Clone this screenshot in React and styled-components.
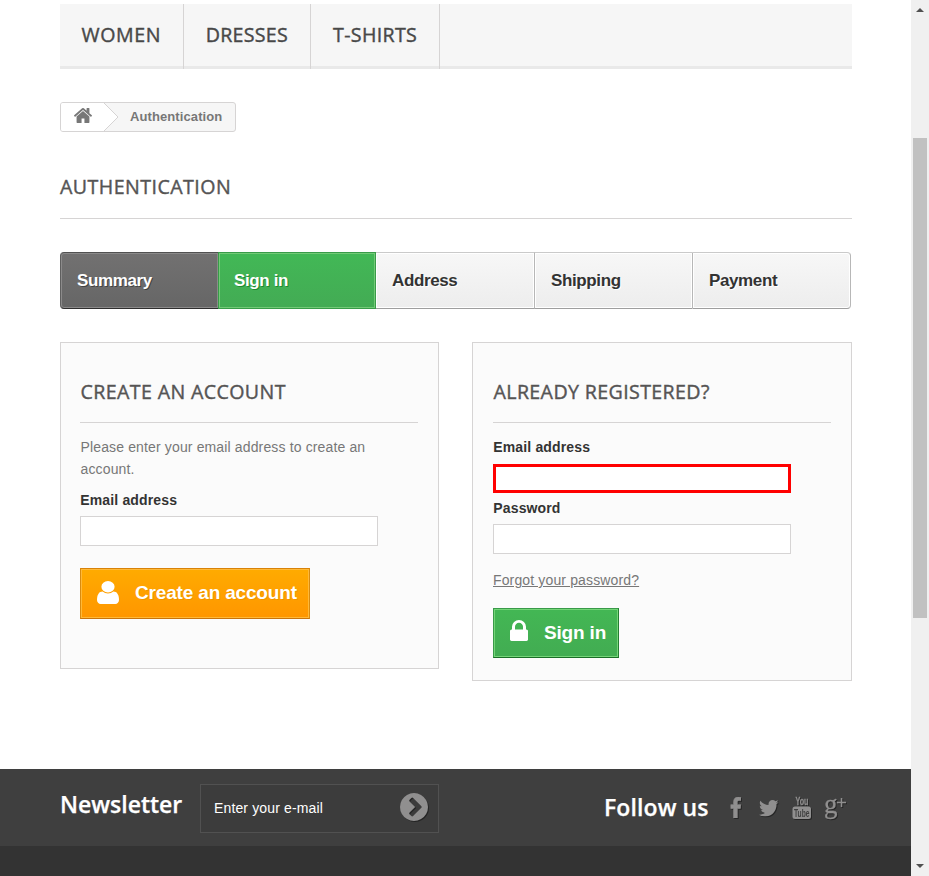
import React from "react";
import styled, { createGlobalStyle, css } from "styled-components";

const GlobalStyle = createGlobalStyle`
  * { box-sizing: border-box; }
  body { margin: 0; background: #fff; overflow: hidden; }
  h1, h2, h3, p { margin: 0; }
`;

const sans = `"Liberation Sans", Arial, sans-serif`;
const display = `"Open Sans", "Noto Sans", sans-serif`;

const Screen = styled.div`
  display: flex;
  width: 929px;
  height: 876px;
  overflow: hidden;
  font: 14px/22px ${sans};
  letter-spacing: 0.14px;
  color: #777;
`;

const Page = styled.div`
  display: flex;
  flex-direction: column;
  width: 911px;
  height: 876px;
`;

const Content = styled.main`
  width: 792px;
  height: 769px;
  margin-left: 60px;
  padding-top: 4px;
`;

const Menu = styled.nav`
  display: flex;
  height: 65px;
  background: linear-gradient(#f6f6f6 62px, #e9e9e9 62px);
`;

const headingText = css`
  font: 400 19.6px/22px ${display};
  letter-spacing: 0.45px;
  -webkit-text-stroke: 0.4px currentColor;
`;

const MenuItem = styled.a`
  width: ${(p) => p.$width}px;
  padding: 20px 0 0 ${(p) => p.$inset}px;
  border-right: 1px solid #d6d4d4;
  color: #484848;
  white-space: nowrap;
  ${headingText}
  letter-spacing: ${(p) => p.$spacing}px;
`;

const Breadcrumb = styled.div`
  display: flex;
  width: 176px;
  height: 30px;
  margin-top: 33px;
  border: 1px solid #d6d4d4;
  border-radius: 3px;
  overflow: hidden;
  background: #f6f6f6;
`;

const HomeLink = styled.a`
  width: 43px;
  padding: 5px 0 0 13px;
  background: #fff;
  line-height: 0;
`;

const Crumb = styled.span`
  padding-left: 11px;
  font: bold 13px/27px ${sans};
  letter-spacing: 0.1px;
  color: #777;
`;

const PageHeading = styled.h1`
  height: 43px;
  margin-top: 44px;
  border-bottom: 1px solid #d6d4d4;
  color: #555454;
  ${headingText}
`;

const Steps = styled.div`
  display: grid;
  grid-template-columns: 158px 158px 158px 158px 159px;
  height: 57px;
  margin-top: 33px;
`;

const stepKinds = {
  done: css`
    background: linear-gradient(#727171, #666);
    border: 1px solid #5f5f5f;
    border-top-color: #515151;
    border-bottom-color: #2e2e2e;
    border-right: 0;
    border-radius: 4px 0 0 4px;
    box-shadow: inset 0 0 0 1px #8b8a8a;
    color: #fff;
    text-shadow: 1px 1px rgba(0, 0, 0, 0.4);
  `,
  current: css`
    background: linear-gradient(#42b856, #43ab54);
    border: 1px solid #399b49;
    box-shadow: inset 0 0 0 1px #73ca77;
    color: #fff;
    text-shadow: 1px 1px #208931;
  `,
  todo: css`
    background: linear-gradient(#f7f7f7, #ededed);
    border: 1px solid #b7b7b7;
    border-top-color: #cacaca;
    border-bottom-color: #9e9e9e;
    border-right: 0;
    box-shadow: inset 0 0 0 1px #fff;
    color: #333;
    text-shadow: 1px 1px #fff;
    &:nth-child(3) { border-left: 0; padding-left: 16px; }
    &:last-child { border-right: 1px solid #b7b7b7; border-radius: 0 4px 4px 0; }
  `,
};

const Step = styled.div`
  padding: 16px 0 0 ${(p) => (p.$kind === "current" ? 15 : 16)}px;
  font: bold 17px/24px ${sans};
  letter-spacing: -0.38px;
  ${(p) => stepKinds[p.$kind]}
`;

const Panels = styled.div`
  display: flex;
  justify-content: space-between;
  align-items: flex-start;
  margin-top: 33px;
`;

const Panel = styled.form`
  width: ${(p) => p.$width}px;
  height: ${(p) => p.$height}px;
  padding: 38px 20px 0 ${(p) => p.$inset}px;
  background: #fbfbfb;
  border: 1px solid #d6d4d4;
`;

const PanelHeading = styled.h3`
  height: 42px;
  margin-bottom: 13px;
  padding-left: 0.5px;
  border-bottom: 1px solid #d6d4d4;
  color: #555454;
  ${headingText}
  letter-spacing: 0.38px;
`;

const Intro = styled.p`
  width: 320px;
  margin-bottom: 9px;
  padding-left: 0.5px;
  color: #777;
`;

const Label = styled.label`
  display: block;
  padding-left: 0.3px;
  font: bold 14px/22px ${sans};
  color: #333;
`;

const Field = styled.input`
  display: block;
  width: 298px;
  height: ${(p) => (p.$alert ? 29 : 30)}px;
  margin: ${(p) => (p.$alert ? "6px 0 4px" : "5px 0 0")};
  padding: 0 8px;
  background: #fff;
  border: ${(p) => (p.$alert ? "3px solid #f00" : "1px solid #d6d4d4")};
  border-radius: 0;
  outline: 0;
`;

const Forgot = styled.a`
  display: block;
  margin-top: 15px;
  color: #777;
  text-decoration: underline;
`;

const buttonKinds = {
  orange: css`
    width: 230px;
    height: 51px;
    margin-top: 22px;
    background: linear-gradient(#ffab00, #ff9600);
    border-color: #d88208 #d98b10 #c8740c #d98b10;
    box-shadow: inset 0 0 0 1px #ffb938;
    text-shadow: 1px 1px rgba(0, 0, 0, 0.08);
  `,
  green: css`
    width: 126px;
    height: 50px;
    margin-top: 17px;
    background: linear-gradient(#43b754, #42ac52);
    border-color: #399a49 #247f32 #1a6d27 #399a49;
    box-shadow: inset 0 0 0 1px #74d578;
  `,
};

const Button = styled.button`
  display: flex;
  align-items: flex-start;
  padding: 0;
  border: 1px solid;
  color: #fff;
  font: bold 19px/24px ${sans};
  letter-spacing: -0.17px;
  white-space: nowrap;
  ${(p) => buttonKinds[p.$kind]}
`;

const ButtonIcon = styled.span`
  display: flex;
  width: ${(p) => p.$width}px;
  padding: ${(p) => p.$top}px 0 0 ${(p) => p.$left}px;
`;

const ButtonText = styled.span`
  padding-top: 12px;
`;

const FooterBar = styled.footer`
  display: flex;
  height: 77px;
  padding-left: 60px;
  background: #3f3f3f;
`;

const FooterTitle = styled.h2`
  width: ${(p) => p.$width}px;
  padding-top: ${(p) => p.$top}px;
  font: 600 23px/30px ${display};
  letter-spacing: ${(p) => p.$spacing}px;
  -webkit-text-stroke: 0.25px currentColor;
  color: #fff;
  white-space: nowrap;
`;

const NewsletterBox = styled.div`
  display: flex;
  justify-content: space-between;
  width: 239px;
  height: 49px;
  margin: 15px 165px 0 0;
  padding: 8px 10px 0 13px;
  background: #3c3c3c;
  border: 1px solid #515151;
`;

const Hint = styled.span`
  font: 14px/30px ${sans};
  color: #fff;
`;

const Socials = styled.div`
  display: flex;
  padding-top: 25px;
  letter-spacing: 0;
`;

const FooterBase = styled.div`
  flex: 1;
  background: #333;
`;

const Scrollbar = styled.div`
  display: flex;
  flex-direction: column;
  align-items: center;
  width: 18px;
  height: 876px;
  padding: 8px 0;
  background: #f0f0f0;
`;

const Thumb = styled.div`
  width: 14px;
  height: 480px;
  margin: 126px 0 auto;
  background: #c1c1c1;
`;

const Glyph = styled.svg`
  display: block;
  flex: none;
  overflow: visible;
  fill: ${(p) => p.$color};
  ${(p) => p.$shadow && css`filter: drop-shadow(1px 1px 0 rgba(0, 0, 0, 0.4));`}
`;

const HOME = "M1472 992v480q0 26-19 45t-45 19h-384v-384h-256v384h-384q-26 0-45-19t-19-45v-480q0-1 .5-3t.5-3l575-474 575 474q1 2 1 6zm223-69l-62 74q-8 9-21 11h-3q-13 0-21-7l-692-577-692 577q-12 8-24 7-13-2-21-11l-62-74q-8-10-7-23.5t11-21.5l719-599q32-26 76-26t76 26l244 204v-195q0-14 9-23t23-9h192q14 0 23 9t9 23v408l219 182q10 8 11 21.5t-7 23.5z";
const USER = "M1536 1399q0 109-62.5 187t-150.5 78h-854q-88 0-150.5-78t-62.5-187q0-85 8.5-160.5t31.5-152 58.5-131 94-89 134.5-34.5q131 128 313 128t313-128q76 0 134.5 34.5t94 89 58.5 131 31.5 152 8.5 160.5zm-256-887q0 159-112.5 271.5t-271.5 112.5-271.5-112.5-112.5-271.5 112.5-271.5 271.5-112.5 271.5 112.5 112.5 271.5z";
const LOCK = "M640 768h512v-192q0-106-75-181t-181-75-181 75-75 181v192zm832 96v576q0 40-28 68t-68 28h-960q-40 0-68-28t-28-68v-576q0-40 28-68t68-28h32v-192q0-184 132-316t316-132 316 132 132 316v192h32q40 0 68 28t28 68z";
const ARROW = "M845 1395l454-454q19-19 19-45t-19-45l-454-454q-19-19-45-19t-45 19l-102 102q-19 19-19 45t19 45l307 307-307 307q-19 19-19 45t19 45l102 102q19 19 45 19t45-19zm819-499q0 209-103 385.5t-279.5 279.5-385.5 103-385.5-103-279.5-279.5-103-385.5 103-385.5 279.5-279.5 385.5-103 385.5 103 279.5 279.5 103 385.5z";
const FACEBOOK = "M1343 12v264h-157q-86 0-116 36t-30 108v189h293l-39 296h-254v759h-306v-759h-255v-296h255v-218q0-186 104-288.5t277-102.5q147 0 228 12z";
const TWITTER = "M1684 408q-67 98-162 167 1 14 1 42 0 130-38 259.5t-115.5 248.5-184.5 210.5-258 146-323 54.5q-271 0-496-145 35 4 78 4 225 0 401-138-105-2-188-64.5t-114-159.5q33 5 61 5 43 0 85-11-112-23-185.5-111.5t-73.5-205.5v-4q68 38 146 41-66-44-105-115t-39-154q0-88 44-163 121 149 294.5 238.5t371.5 99.5q-8-38-8-74 0-134 94.5-228.5t228.5-94.5q140 0 236 102 109-21 205-78-37 115-142 178 93-10 186-50z";

function Icon({ path, box, width, height, color, shadow }) {
  return (
    <Glyph width={width} height={height} viewBox={box} preserveAspectRatio="none" $color={color} $shadow={shadow} aria-hidden="true">
      <path d={path} />
    </Glyph>
  );
}

const CrumbArrow = () => (
  <Glyph width="15" height="28" viewBox="0 0 15 28" $color="#fff" aria-hidden="true">
    <path d="M0 0L14 14L0 28Z" />
    <path d="M0 0L14 14L0 28" fill="none" stroke="#d6d4d4" />
  </Glyph>
);

const SocialIcons = () => (
  <Glyph width="120" height="30" viewBox="0 0 120 30" $color="#908f8f" $shadow aria-hidden="true">
    <svg x="1.5" y="3" width="10.5" height="21" viewBox="479 0 864 1664" preserveAspectRatio="none">
      <path d={FACEBOOK} stroke="#908f8f" strokeWidth="50" />
    </svg>
    <svg x="30" y="6" width="19.5" height="16.5" viewBox="108 256 1576 1280" preserveAspectRatio="none">
      <path d={TWITTER} />
    </svg>
    <rect x="63.5" y="12.5" width="18.5" height="12.5" rx="2.5" />
    <g fontFamily="Liberation Sans, sans-serif" fontWeight="bold">
      <text x="66.5" y="11" fontSize="11" textLength="13" lengthAdjust="spacingAndGlyphs" stroke="#908f8f" strokeWidth=".3">You</text>
      <text x="65" y="23" fontSize="11.5" textLength="15.5" lengthAdjust="spacingAndGlyphs" fill="#3f3f3f">Tube</text>
    </g>
    <text x="95" y="18.5" fontSize="27" fontFamily="Liberation Serif, serif" stroke="#908f8f" strokeWidth=".3">g</text>
    <path d="M108 8.5h9M112.5 4v9" stroke="#908f8f" strokeWidth="1.5" />
  </Glyph>
);

export default function App() {
  return (
    <Screen>
      <GlobalStyle />
      <Page>
        <Content>
          <Menu>
            <MenuItem $width={124} $inset={21.5} $spacing={0.6}>WOMEN</MenuItem>
            <MenuItem $width={127} $inset={21.7} $spacing={0.28}>DRESSES</MenuItem>
            <MenuItem $width={129} $inset={22} $spacing={0.35}>T-SHIRTS</MenuItem>
          </Menu>
          <Breadcrumb>
            <HomeLink aria-label="Home">
              <Icon path={HOME} box="89 253 1614 1283" width={18} height={15} color="#777" />
            </HomeLink>
            <CrumbArrow />
            <Crumb>Authentication</Crumb>
          </Breadcrumb>
          <PageHeading>AUTHENTICATION</PageHeading>
          <Steps>
            <Step $kind="done">Summary</Step>
            <Step $kind="current">Sign in</Step>
            <Step $kind="todo">Address</Step>
            <Step $kind="todo">Shipping</Step>
            <Step $kind="todo">Payment</Step>
          </Steps>
          <Panels>
            <Panel $width={379} $height={327} $inset={19}>
              <PanelHeading>CREATE AN ACCOUNT</PanelHeading>
              <Intro>Please enter your email address to create an account.</Intro>
              <Label htmlFor="new-email">Email address</Label>
              <Field id="new-email" />
              <Button type="button" $kind="orange">
                <ButtonIcon $width={54} $left={16} $top={12}>
                  <Icon path={USER} box="256 128 1280 1536" width={22} height={23} color="#fff" />
                </ButtonIcon>
                <ButtonText>Create an account</ButtonText>
              </Button>
            </Panel>
            <Panel $width={380} $height={339} $inset={20}>
              <PanelHeading>ALREADY REGISTERED?</PanelHeading>
              <Label htmlFor="email">Email address</Label>
              <Field id="email" $alert />
              <Label htmlFor="password">Password</Label>
              <Field id="password" type="password" />
              <Forgot>Forgot your password?</Forgot>
              <Button type="button" $kind="green">
                <ButtonIcon $width={50} $left={16} $top={11}>
                  <Icon path={LOCK} box="320 128 1152 1408" width={18} height={21} color="#fff" />
                </ButtonIcon>
                <ButtonText>Sign in</ButtonText>
              </Button>
            </Panel>
          </Panels>
        </Content>
        <FooterBar>
          <FooterTitle $width={140} $top={20} $spacing={0}>Newsletter</FooterTitle>
          <NewsletterBox>
            <Hint>Enter your e-mail</Hint>
            <Icon path={ARROW} box="128 128 1536 1536" width={28} height={28} color="#908f8f" shadow />
          </NewsletterBox>
          <FooterTitle $width={125} $top={23} $spacing={0.1}>Follow us</FooterTitle>
          <Socials><SocialIcons /></Socials>
        </FooterBar>
        <FooterBase />
      </Page>
      <Scrollbar aria-hidden="true">
        <Icon path="M4 0L8 4H0Z" box="0 0 8 4" width={8} height={4} color="#505050" />
        <Thumb />
        <Icon path="M0 0H8L4 4Z" box="0 0 8 4" width={8} height={4} color="#505050" />
      </Scrollbar>
    </Screen>
  );
}
